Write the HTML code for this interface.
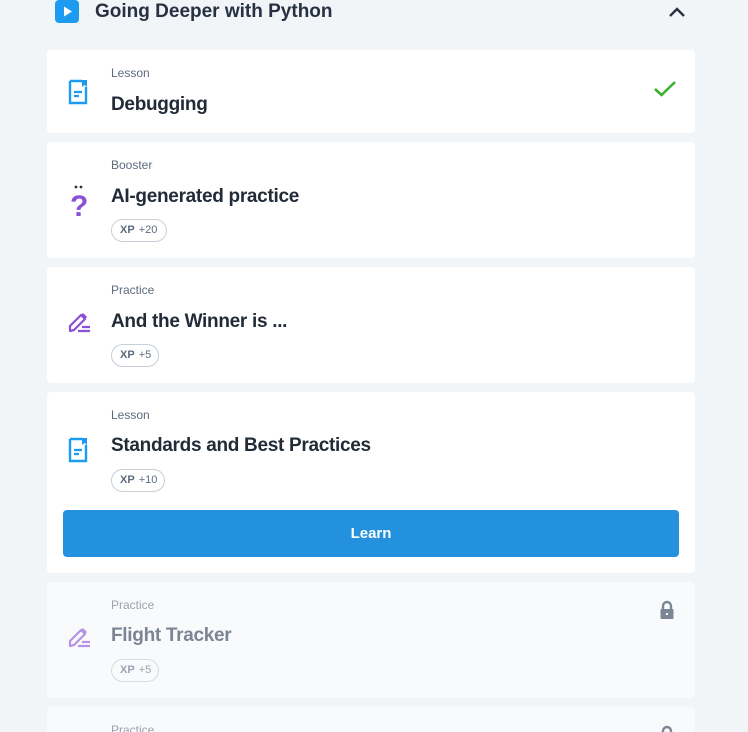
<!DOCTYPE html>
<html><head><style>
html,body{margin:0;width:748px;height:732px;overflow:hidden}
body{background:#f2f5f8;font-family:"Liberation Sans",sans-serif;position:relative}
.hdr{position:absolute;left:55px;top:0;width:24px;height:23px;background:#1d9bf0;border-radius:4px}
.ht{position:absolute;left:95px;top:1px;font-size:19px;font-weight:bold;color:#273142}
.card{position:absolute;left:47px;width:648px;background:#fff;border-radius:4px}
.card.dis{background:#f9fafc}
.lab{position:absolute;left:64px;font-size:12px;color:#5d6b7e}
.tit{position:absolute;left:64px;font-size:19px;font-weight:bold;color:#222b38;letter-spacing:-0.3px}
.dis .tit{color:#7c8593}.dis .lab{color:#9aa3b0}
.xp{position:absolute;left:64px;height:23px;border:1px solid #c8cfd9;border-radius:12px;font-size:11px;line-height:21px;padding:0 8px;color:#5d6b7e;box-sizing:border-box}
.xp b{margin-right:4px}
.ic{position:absolute;left:20px}
.btn{position:absolute;left:16px;top:118px;width:616px;height:47px;background:#2391dd;border-radius:4px;color:#fff;font-weight:bold;font-size:15px;text-align:center;line-height:47px}
</style></head><body>
<div class="hdr"><svg width="24" height="23"><path d="M9 6.5 L17 11.5 L9 16.5Z" fill="#fff"/></svg></div>
<div class="ht">Going Deeper with Python</div>
<svg style="position:absolute;left:668px;top:5px" width="18" height="14"><path d="M2 11 L9 4 L16 11" stroke="#273142" stroke-width="2.4" fill="none"/></svg>

<div class="card" style="top:50px;height:83px">
 <svg class="ic" style="top:28px" width="24" height="28"><path d="M3 3 H15 M19 9 V25 H3 V3" stroke="#1d9bf0" stroke-width="2.4" fill="none"/><path d="M15 2 H20 V9 L17.5 7 L15 9Z" fill="#1d9bf0"/><path d="M7 14 H15 M7 18 H12" stroke="#1d9bf0" stroke-width="2.2"/></svg>
 <div class="lab" style="top:16px">Lesson</div>
 <div class="tit" style="top:44px">Debugging</div>
 <svg style="position:absolute;left:606px;top:30px" width="24" height="18"><path d="M2 9 L8.5 15 L22 2" stroke="#3cb02f" stroke-width="2.6" fill="none"/></svg>
</div>

<div class="card" style="top:142px;height:116px">
 <svg class="ic" style="top:42px" width="24" height="34"><text x="3" y="32" font-size="30" font-weight="bold" fill="#8c4fd6" font-family="Liberation Sans">?</text><circle cx="9" cy="3" r="1.4" fill="#273142"/><circle cx="14" cy="3" r="1.4" fill="#273142"/></svg>
 <div class="lab" style="top:16px">Booster</div>
 <div class="tit" style="top:44px">AI-generated practice</div>
 <div class="xp" style="top:77px;width:56px"><b>XP</b>+20</div>
</div>

<div class="card" style="top:267px;height:116px">
 <svg class="ic" style="top:45px" width="26" height="24"><path d="M3 19 L3 14 L14 3 L18 7 L7 18 Z" stroke="#8c4fd6" stroke-width="2.2" fill="none" stroke-linejoin="round"/><path d="M11 19 H23 M15 15 H23" stroke="#8c4fd6" stroke-width="2.2"/><path d="M15 2 L19 6" stroke="#8c4fd6" stroke-width="3"/></svg>
 <div class="lab" style="top:16px">Practice</div>
 <div class="tit" style="top:44px">And the Winner is ...</div>
 <div class="xp" style="top:77px;width:48px"><b>XP</b>+5</div>
</div>

<div class="card" style="top:392px;height:181px">
 <svg class="ic" style="top:44px" width="24" height="28"><path d="M3 3 H15 M19 9 V25 H3 V3" stroke="#1d9bf0" stroke-width="2.4" fill="none"/><path d="M15 2 H20 V9 L17.5 7 L15 9Z" fill="#1d9bf0"/><path d="M7 14 H15 M7 18 H12" stroke="#1d9bf0" stroke-width="2.2"/></svg>
 <div class="lab" style="top:16px">Lesson</div>
 <div class="tit" style="top:43px">Standards and Best Practices</div>
 <div class="xp" style="top:77px;width:54px"><b>XP</b>+10</div>
 <div class="btn">Learn</div>
</div>

<div class="card dis" style="top:582px;height:116px">
 <svg class="ic" style="top:45px;opacity:.6" width="26" height="24"><path d="M3 19 L3 14 L14 3 L18 7 L7 18 Z" stroke="#8c4fd6" stroke-width="2.2" fill="none" stroke-linejoin="round"/><path d="M11 19 H23 M15 15 H23" stroke="#8c4fd6" stroke-width="2.2"/><path d="M15 2 L19 6" stroke="#8c4fd6" stroke-width="3"/></svg>
 <div class="lab" style="top:16px">Practice</div>
 <div class="tit" style="top:43px">Flight Tracker</div>
 <div class="xp" style="top:77px;width:48px;color:#9aa3b0;border-color:#d5dbe3"><b>XP</b>+5</div>
 <svg style="position:absolute;left:611px;top:18px" width="18" height="20"><path d="M5 9 V6 A4 4 0 0 1 13 6 V9" stroke="#7c8593" stroke-width="2.4" fill="none"/><rect x="2.5" y="9" width="13" height="10" rx="1" fill="#7c8593"/><rect x="8" y="13" width="2" height="2" fill="#fff"/></svg>
</div>

<div class="card dis" style="top:707px;height:60px">
 <div class="lab" style="top:16px">Practice</div>
 <svg style="position:absolute;left:611px;top:18px" width="18" height="20"><path d="M5 9 V6 A4 4 0 0 1 13 6 V9" stroke="#7c8593" stroke-width="2.4" fill="none"/><rect x="2.5" y="9" width="13" height="10" rx="1" fill="#7c8593"/></svg>
</div>
</body></html>
